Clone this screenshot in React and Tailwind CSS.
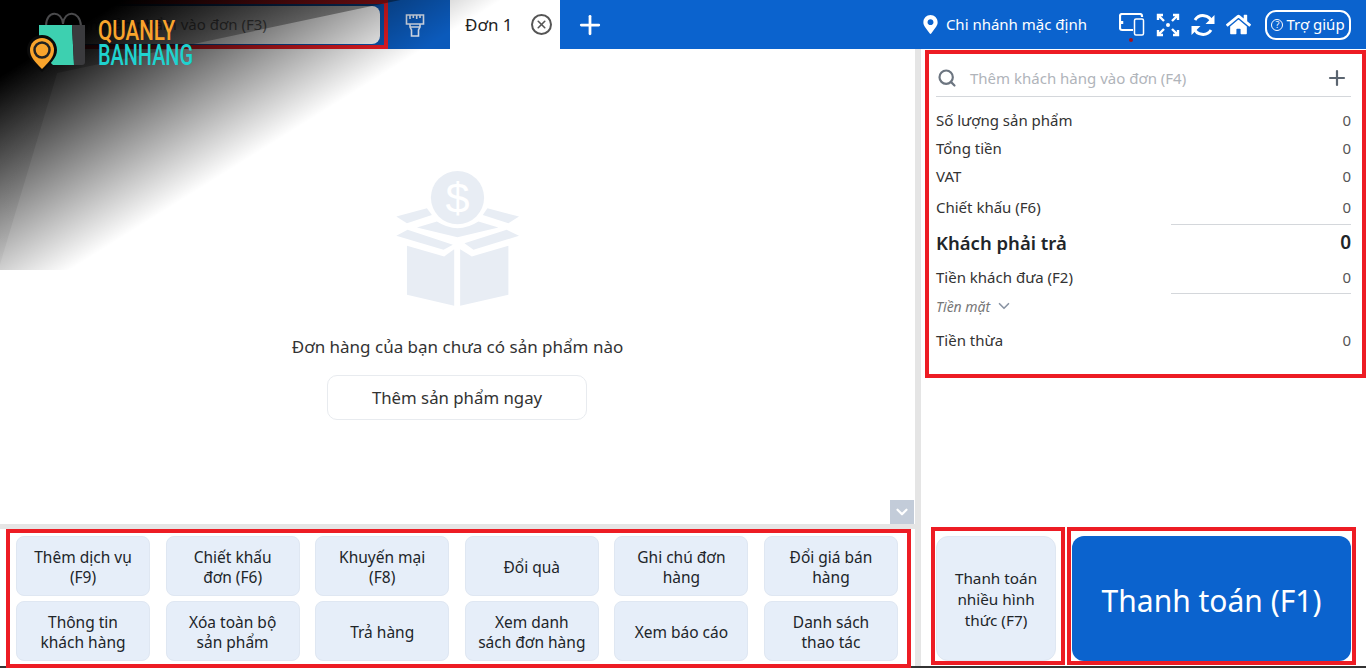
import { ChevronDown, Plus, Search, X } from 'lucide-react';
import { FaHome, FaMapMarkerAlt } from 'react-icons/fa';

const ACTIONS = [
  ['Thêm dịch vụ', '(F9)'],
  ['Chiết khấu', 'đơn (F6)'],
  ['Khuyến mại', '(F8)'],
  ['Đổi quà'],
  ['Ghi chú đơn', 'hàng'],
  ['Đổi giá bán', 'hàng'],
  ['Thông tin', 'khách hàng'],
  ['Xóa toàn bộ', 'sản phẩm'],
  ['Trả hàng'],
  ['Xem danh', 'sách đơn hàng'],
  ['Xem báo cáo'],
  ['Danh sách', 'thao tác'],
];

function LogoMark() {
  return (
    <svg width="200" height="75" viewBox="0 0 200 75" className="absolute left-0 top-0">
      <path d="M46 32V26C46 10 62 10 63 24M63 24C64 10 80 10 81 26V32" fill="none" stroke="#4a4a4c" strokeWidth="2" />
      <path d="M39 25H72L74 65H53L39 52Z" fill="#3dd0b0" />
      <path d="M72 25H85V62Q85 65 82 65H74Z" fill="#3b3b3e" />
      <path d="M42 72C34 64 27 58 27 50a15 15 0 0 1 30 0C57 58 50 64 42 72Z" fill="#0a0a0a" />
      <path d="M42 69C35 62 30 57 30 50a12 12 0 0 1 24 0C54 57 49 62 42 69Z" fill="#f9a42c" />
      <circle cx="42" cy="50" r="7.500" fill="#f9a42c" stroke="#222" strokeWidth="2.500" />
      <text x="98" y="40" fontFamily="Roboto, sans-serif" fontSize="27" fontWeight="500" fill="#f9a42c" textLength="77" lengthAdjust="spacingAndGlyphs">QUANLY</text>
      <text x="98" y="65" fontFamily="Roboto, sans-serif" fontSize="30" fontWeight="500" fill="#1fd3cf" textLength="95" lengthAdjust="spacingAndGlyphs">BANHANG</text>
    </svg>
  );
}

// dark fade that sits over the top-left corner of the page
function CornerShade() {
  return (
    <div className="pointer-events-none absolute left-0 top-0 z-20 h-[270px] w-[520px]">
      <div className="absolute inset-0 bg-[linear-gradient(148deg,#000_0px,#000_65px,rgba(0,0,0,0)_266px)]" />
      <div className="absolute inset-0 bg-[linear-gradient(180deg,rgba(0,0,0,0.4),rgba(0,0,0,0.12)_40%,rgba(0,0,0,0.03))] [clip-path:polygon(0_0,77%_0,11%_27%,0_98%)]" />
      <LogoMark />
    </div>
  );
}

function BrushIcon() {
  return (
    <svg width="20" height="24" viewBox="0 0 20 24" fill="none" stroke="#dfe8f5" strokeWidth="1.600">
      <path d="M1.500 2H18.500V11H1.500Z" />
      <path d="M5 2V6M8.300 2V5M11.700 2V6M15 2V5" />
      <path d="M5 11V14L6.500 17V23H13.500V17L15 14V11M5 14H15" />
    </svg>
  );
}

function DevicesIcon() {
  return (
    <svg width="26" height="24" viewBox="0 0 26 24" fill="none" stroke="#fff" strokeWidth="2">
      <path d="M14 17H3Q1 17 1 15V3Q1 1 3 1H21Q23 1 23 3V4" strokeWidth="2.200" />
      <rect x="15.500" y="6" width="9" height="16" rx="1.500" strokeWidth="1.500" />
      <path d="M3 8V11" strokeWidth="2.500" />
    </svg>
  );
}

function ExpandIcon() {
  return (
    <svg width="24" height="24" viewBox="0 0 24 24" fill="none" stroke="#fff" strokeWidth="2.400">
      <path d="M2 7V2H7M2 2L8 8M22 7V2H17M22 2L16 8M2 17V22H7M2 22L8 16M22 17V22H17M22 22L16 16" />
      <circle cx="12" cy="12" r="2" fill="#fff" stroke="none" />
    </svg>
  );
}

function RefreshIcon() {
  return (
    <svg width="24" height="24" viewBox="0 0 24 24" fill="none" stroke="#fff" strokeWidth="3">
      <path d="M21 9A9.500 9.500 0 0 0 4 7" />
      <path d="M3 15A9.500 9.500 0 0 0 20 17" />
      <path d="M23.500 2V11H14.500Z" fill="#fff" stroke="none" />
      <path d="M0.500 22V13H9.500Z" fill="#fff" stroke="none" />
    </svg>
  );
}

function EmptyBoxIcon() {
  return (
    <svg width="127" height="138" viewBox="72 30 380 415" fill="#e8edf4">
      <circle cx="262" cy="113" r="80" />
      <text x="262" y="160" textAnchor="middle" fontFamily="Liberation Sans, sans-serif" fontSize="130" fill="#fff">$</text>
      <path d="M78 170L170 145L185 165L110 190Z" />
      <path d="M447 170L352 145L338 165L415 190Z" />
      <path d="M140 203L200 185Q262 225 325 185L385 203L262 232Z" />
      <path d="M78 228L112 210L248 255L220 270Z" />
      <path d="M447 228L410 210L283 250L310 270Z" />
      <path d="M110 258L222 290L252 268V438L110 405Z" />
      <path d="M270 268L305 290L415 258V405L270 438Z" />
    </svg>
  );
}

function Header() {
  return (
    <header className="flex h-[49px] shrink-0 bg-[#0b63ce]">
      <div className="flex w-[388px] items-center border-[4px] border-[#ed1c24] bg-[#0b55b0] pl-[1px] pr-[4px]">
        <div className="flex h-[38px] flex-1 items-center rounded-[8px] bg-white pl-[72px] text-[15px] text-[#777]">
          Tìm sản phẩm vào đơn (F3)
        </div>
      </div>
      <div className="flex w-[62px] items-center justify-center bg-[#0b5abb] pr-[8px]">
        <BrushIcon />
      </div>
      <div className="flex w-[110px] items-center bg-white pl-[15px] text-[17px] text-[#222]">
        Đơn 1
        <span className="ml-[18px] flex h-[21px] w-[21px] items-center justify-center rounded-full border-2 border-[#555]">
          <X size={13} strokeWidth={3} color="#555" />
        </span>
      </div>
      <div className="ml-[15px] flex items-center">
        <Plus size={30} strokeWidth={2.2} color="#fff" />
      </div>
      <div className="ml-auto flex items-center pr-[15px] text-white">
        <FaMapMarkerAlt size={19} />
        <span className="ml-[6px] text-[15px]">Chi nhánh mặc định</span>
        <span className="relative ml-[32px] flex">
          <DevicesIcon />
          <span className="absolute bottom-[-5px] left-[10px] h-[4px] w-[4px] rounded-full bg-[#a5121c]" />
        </span>
        <span className="ml-[11px] flex"><ExpandIcon /></span>
        <span className="ml-[11px] flex"><RefreshIcon /></span>
        <span className="ml-[11px] flex"><FaHome size={25} /></span>
        <span className="ml-[14px] flex h-[30px] w-[86px] items-center justify-center rounded-[11px] border-2 border-white text-[15px]">
          <span className="mr-[3px] flex h-[12px] w-[12px] items-center justify-center rounded-full border border-white text-[9px] leading-none">?</span>
          Trợ giúp
        </span>
      </div>
    </header>
  );
}

function ActionGrid() {
  return (
    <div className="relative z-10 mb-[-2px] ml-[6px] h-[139px] w-[905px] border-[4px] border-[#ed1c24] bg-white pl-[6px] pt-[3px]">
      <div className="grid w-[882px] grid-cols-6 gap-x-[15.6px] gap-y-[5px]">
        {ACTIONS.map((lines) => (
          <button
            key={lines.join(' ')}
            className="flex h-[60px] flex-col items-center justify-center rounded-[8px] border border-[#dfe7f2] bg-[#e6eef9] pt-[3px] text-[15.500px] leading-[19.500px] text-[#212529]"
          >
            {lines.map((line) => (
              <span key={line}>{line}</span>
            ))}
          </button>
        ))}
      </div>
    </div>
  );
}

function OrderArea() {
  return (
    <div className="flex w-[915px] shrink-0 flex-col">
      <main className="relative flex flex-1 flex-col items-center pt-[121px]">
        <EmptyBoxIcon />
        <p className="mt-[27px] text-[17px] leading-[24px] text-[#333]">Đơn hàng của bạn chưa có sản phẩm nào</p>
        <button className="mr-[1px] mt-[16px] h-[45px] w-[260px] rounded-[10px] border border-[#e8ebef] pt-[1px] text-[16.800px] text-[#333]">
          Thêm sản phẩm ngay
        </button>
        <span className="absolute bottom-0 right-[1px] flex h-[24px] w-[24px] items-center justify-center bg-[#c3ccd9]">
          <ChevronDown size={18} strokeWidth={3} color="#fff" />
        </span>
      </main>
      <div className="h-[5px] bg-[#e5e5e5]" />
      <ActionGrid />
    </div>
  );
}

function SummaryRow({ label, value = '0', className = 'h-[28px]' }) {
  return (
    <div className={`flex items-center justify-between text-[15px] text-[#333] ${className}`}>
      <span>{label}</span>
      <span className="text-[#555]">{value}</span>
    </div>
  );
}

function Summary() {
  return (
    <section className="mt-[1px] h-[328px] border-[4px] border-[#ed1c24] pl-[7px] pr-[11px] pt-[6px]">
      <div className="flex h-[37px] items-center border-b border-[#d4d7db]">
        <Search size={20} strokeWidth={2.6} color="#6c7580" className="ml-[1px]" />
        <span className="ml-[13px] flex-1 text-[15px] text-[#b0b4ba]">Thêm khách hàng vào đơn (F4)</span>
        <Plus size={24} strokeWidth={2.2} color="#5b6570" className="mr-[2px]" />
      </div>
      <div className="mt-[9px]">
        <SummaryRow label="Số lượng sản phẩm" />
        <SummaryRow label="Tổng tiền" />
        <SummaryRow label="VAT" />
        <SummaryRow label="Chiết khấu (F6)" className="h-[34px]" />
        <div className="ml-auto h-px w-[180px] bg-[#d4d7db]" />
        <div className="flex h-[37px] items-center justify-between pb-[2px] text-[#212529]">
          <span className="text-[18.500px] font-semibold">Khách phải trả</span>
          <span className="text-[19px] font-semibold">0</span>
        </div>
        <SummaryRow label="Tiền khách đưa (F2)" className="h-[31px]" />
        <div className="ml-auto h-px w-[180px] bg-[#d4d7db]" />
        <div className="flex h-[24px] items-center text-[14px] italic text-[#777]">
          Tiền mặt
          <ChevronDown size={18} strokeWidth={2.2} color="#8a94a3" className="ml-[5px]" />
        </div>
        <SummaryRow label="Tiền thừa" className="mt-[5px] h-[34px]" />
      </div>
    </section>
  );
}

function PayButtons() {
  return (
    <div className="mb-[1px] ml-[6px] mt-auto flex">
      <div className="h-[138px] w-[134px] border-[4px] border-[#ed1c24] pl-[1px] pt-[5px]">
        <button className="flex h-[125px] w-[120px] flex-col items-center justify-center rounded-[12px] border border-[#dfe7f2] bg-[#e6eef9] pt-[2px] text-[15.300px] leading-[21px] text-[#212529]">
          <span>Thanh toán</span>
          <span>nhiều hình</span>
          <span>thức (F7)</span>
        </button>
      </div>
      <div className="ml-[2px] h-[138px] w-[289px] border-[4px] border-[#ed1c24] pl-[1px] pt-[5px]">
        <button className="h-[125px] w-[279px] rounded-[12px] bg-[#0b63ce] pt-[3px] text-[30px] text-white">
          Thanh toán (F1)
        </button>
      </div>
    </div>
  );
}

export default function App() {
  return (
    <div className="relative flex h-screen w-full flex-col overflow-hidden bg-white font-['Noto_Sans',sans-serif]">
      <Header />
      <div className="flex flex-1">
        <OrderArea />
        <div className="w-[6px] shrink-0 bg-[#e5e5e5]" />
        <aside className="flex flex-1 flex-col pl-[4px]">
          <Summary />
          <PayButtons />
        </aside>
      </div>
      <div className="h-[2px] shrink-0 bg-[#333]" />
      <CornerShade />
    </div>
  );
}
